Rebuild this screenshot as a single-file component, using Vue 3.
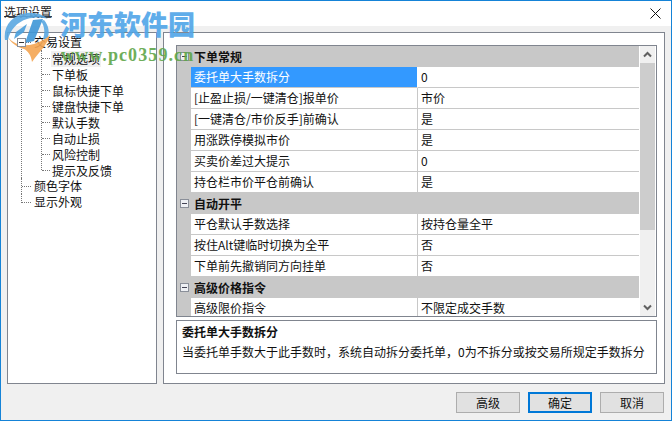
<script setup>
const tree = [
  { label: '交易设置', open: true, children: ['常规选项', '下单板', '鼠标快捷下单', '键盘快捷下单', '默认手数', '自动止损', '风险控制', '提示及反馈'] },
  { label: '颜色字体' },
  { label: '显示外观' },
]
const sections = [
  { title: '下单常规', rows: [
    ['委托单大手数拆分', '0'],
    ['[止盈止损/一键清仓]报单价', '市价'],
    ['[一键清仓/市价反手]前确认', '是'],
    ['用涨跌停模拟市价', '是'],
    ['买卖价差过大提示', '0'],
    ['持仓栏市价平仓前确认', '是'],
  ] },
  { title: '自动开平', rows: [
    ['平仓默认手数选择', '按持仓量全平'],
    ['按住Alt键临时切换为全平', '否'],
    ['下单前先撤销同方向挂单', '否'],
  ] },
  { title: '高级价格指令', rows: [
    ['高级限价指令', '不限定成交手数'],
  ] },
]
</script>

<template>
  <div class="window">
    <div class="titlebar">
      <span class="title">选项设置</span>
      <svg class="close" width="11" height="11" viewBox="0 0 11 11">
        <path d="M0.5 0.5L10.5 10.5M10.5 0.5L0.5 10.5" stroke="#111" stroke-width="1" fill="none" />
      </svg>
    </div>

    <div class="main">
      <ul class="tree">
        <li v-for="node in tree" :key="node.label" class="node">
          <div class="tree-row top-row">
            <span v-if="node.open" class="tree-box"><i></i></span>
            <span class="tree-label">{{ node.label }}</span>
          </div>
          <ul v-if="node.children" class="sub">
            <li v-for="(c, i) in node.children" :key="c" class="sub-node">
              <span class="tree-label" :class="{ current: i === 0 }">{{ c }}</span>
            </li>
          </ul>
        </li>
      </ul>

      <div class="panel">
        <div class="grid">
          <div class="grid-list">
            <template v-for="(s, si) in sections" :key="s.title">
              <div class="section">
                <span class="sec-box"><i></i></span>
                <span class="sec-title">{{ s.title }}</span>
              </div>
              <div v-for="(r, ri) in s.rows" :key="r[0]" class="row">
                <div class="gutter"></div>
                <div class="name" :class="{ selected: si === 0 && ri === 0 }">{{ r[0] }}</div>
                <div class="value">{{ r[1] }}</div>
              </div>
            </template>
          </div>
          <div class="scrollbar">
            <div class="arrow">
              <svg width="9" height="7" viewBox="0 0 9 7"><path d="M1 5.5L4.5 2L8 5.5" stroke="#606060" stroke-width="2" fill="none" /></svg>
            </div>
            <div class="thumb"></div>
            <div class="track"></div>
            <div class="arrow">
              <svg width="9" height="7" viewBox="0 0 9 7"><path d="M1 1.5L4.5 5L8 1.5" stroke="#606060" stroke-width="2" fill="none" /></svg>
            </div>
          </div>
        </div>
        <div class="desc">
          <div class="desc-title">委托单大手数拆分</div>
          <div class="desc-text">当委托单手数大于此手数时，系统自动拆分委托单，0为不拆分或按交易所规定手数拆分</div>
        </div>
      </div>
    </div>

    <div class="buttons">
      <button class="btn">高级</button>
      <button class="btn default">确定</button>
      <button class="btn">取消</button>
    </div>

    <div class="watermark">
      <svg class="logo" width="56" height="62" viewBox="0 0 56 62">
        <path d="M5 40C3 26 12 15 27 13C35 12 42 14 48 19C42 17 34 17 27 19C17 22 10 30 8 40Z" fill="#5aa8e2" />
        <path d="M44 20C49 26 50 33 47 40L43 39C45 33 45 27 41 21Z" fill="#5aa8e2" />
        <path d="M33 20L43 19L34 41L25 43Z" fill="#3f97d8" />
        <path d="M16 32L27 24L24 32L14 39Z" fill="#4a9fdc" />
        <path d="M8 37C14 45 24 47 34 44C40 42 46 39 50 35C47 45 40 51 32 62C31 55 28 51 24 49C17 47 11 43 8 37Z" fill="#f5a653" />
      </svg>
      <div class="wm-name">河东软件园</div>
      <div class="wm-url">www.pc0359.cn</div>
    </div>
  </div>
</template>

<style>
html, body { margin: 0; padding: 0; }
</style>

<style scoped>
* { box-sizing: border-box; }
ul { list-style: none; margin: 0; padding: 0; }
.window {
  position: relative;
  width: 672px;
  height: 421px;
  overflow: hidden;
  display: flex;
  flex-direction: column;
  background: #f0f0f0;
  border: 1px solid #1583d7;
  font-family: "Noto Sans CJK SC", "Liberation Sans", sans-serif;
  font-size: 12px;
  color: #111;
}
.titlebar {
  height: 25px;
  flex: none;
  background: #fff;
  display: flex;
  align-items: flex-start;
  justify-content: space-between;
  padding: 5px 10px 0 3px;
}
.title {
  line-height: 12px;
  height: 11px;
  border-bottom: 1px solid #33435a;
  color: #222;
}
.close { margin-top: 2px; }
.main {
  flex: none;
  height: 352px;
  margin-top: 6px;
  padding: 0 6px;
  display: flex;
  gap: 6px;
}
.tree {
  width: 150px;
  flex: none;
  background: #fff;
  border: 1px solid #80858f;
  padding-top: 1px;
}
.node { position: relative; }
.node::before {
  content: "";
  position: absolute;
  left: 13px;
  top: 0;
  bottom: 0;
  border-left: 1px dotted #777;
}
.node:last-child::before { bottom: auto; height: 9px; }
.node:first-child::before { top: 9px; }
.tree-row {
  position: relative;
  height: 16px;
  line-height: 16px;
  padding-left: 25px;
}
.tree-row::before {
  content: "";
  position: absolute;
  left: 14px;
  top: 8px;
  width: 9px;
  border-top: 1px dotted #777;
}
.tree-box {
  position: absolute;
  z-index: 1;
  left: 9px;
  top: 4px;
  width: 9px;
  height: 9px;
  background: #fff;
  border: 1px solid #8a8f99;
  display: flex;
  align-items: center;
  justify-content: center;
}
.tree-box i { width: 5px; height: 1px; background: #333; }
.tree-label { display: inline-block; padding: 0 1px; height: 16px; line-height: 16px; }
.sub { position: relative; padding-left: 43px; }
.sub::before {
  content: "";
  position: absolute;
  left: 33px;
  top: 0;
  bottom: 8px;
  border-left: 1px dotted #777;
}
.sub-node { position: relative; height: 16px; }
.sub-node::before {
  content: "";
  position: absolute;
  left: -9px;
  top: 8px;
  width: 8px;
  border-top: 1px dotted #777;
}
.current { background: #f0f0f0; }
.panel {
  width: 502px;
  flex: none;
  background: #fff;
  border: 1px solid #80858f;
  padding: 12px 7px 9px 12px;
  display: flex;
  flex-direction: column;
  gap: 3px;
}
.grid {
  height: 272px;
  flex: none;
  border: 1px solid #80858f;
  display: flex;
  overflow: hidden;
  background: #fff;
}
.grid-list {
  width: 462px;
  flex: none;
  margin-right: 1px;
  overflow: hidden;
}
.section {
  height: 21px;
  background: #c8c8c8;
  display: flex;
  align-items: center;
  font-weight: 700;
  line-height: 19px;
}
.sec-box {
  width: 9px;
  height: 9px;
  margin: 0 5px 0 3px;
  background: #eef0f4;
  border: 1px solid #8a8f99;
  display: flex;
  align-items: center;
  justify-content: center;
}
.sec-title { margin-top: -1px; }
.sec-box i { width: 5px; height: 1px; background: #445; }
.row {
  height: 21px;
  display: flex;
  line-height: 19px;
}
.gutter { width: 14px; flex: none; background: #c8c8c8; }
.name {
  width: 227px;
  flex: none;
  padding-left: 3px;
  border-bottom: 1px solid #c8c8c8;
  border-right: 1px solid #c8c8c8;
}
.name.selected {
  background: #3399ff;
  color: #fff;
  border-right-color: #fff;
}
.value {
  flex: 1;
  padding-left: 3px;
  border-bottom: 1px solid #c8c8c8;
}
.scrollbar {
  width: 15px;
  flex: none;
  display: flex;
  flex-direction: column;
  background: #f0f0f0;
}
.arrow {
  height: 17px;
  flex: none;
  display: flex;
  align-items: center;
  justify-content: center;
  background: #f0f0f0;
}
.thumb { height: 167px; flex: none; background: #cdcdcd; }
.track { flex: 1; }
.desc {
  height: 54px;
  flex: none;
  border: 1px solid #80858f;
  padding: 1px 5px;
  line-height: 20px;
}
.desc-title { font-weight: 700; }
.desc-text { white-space: nowrap; }
.buttons {
  flex: none;
  margin-top: 8px;
  padding-right: 7px;
  display: flex;
  justify-content: flex-end;
  gap: 8px;
}
.btn {
  width: 64px;
  height: 21px;
  padding: 0;
  background: #e1e1e1;
  border: 1px solid #adadad;
  font: inherit;
  color: #111;
  line-height: 18px;
}
.btn.default { border: 2px solid #0078d7; }
.watermark {
  position: absolute;
  left: -1px;
  top: -1px;
  width: 220px;
  height: 70px;
  pointer-events: none;
}
.logo { position: absolute; left: 0; top: 0; opacity: 0.9; }
.wm-name {
  position: absolute;
  left: 60px;
  top: 6px;
  font-family: "Noto Sans CJK SC", sans-serif;
  font-weight: 900;
  font-size: 27px;
  line-height: 36px;
  white-space: nowrap;
  color: #4fa5e8;
  opacity: 0.9;
}
.wm-url {
  position: absolute;
  left: 61px;
  top: 45px;
  font-family: "Liberation Serif", serif;
  font-weight: 700;
  font-size: 18px;
  line-height: 20px;
  letter-spacing: 1.1px;
  white-space: nowrap;
  color: #5fa64a;
  opacity: 0.9;
}
</style>
